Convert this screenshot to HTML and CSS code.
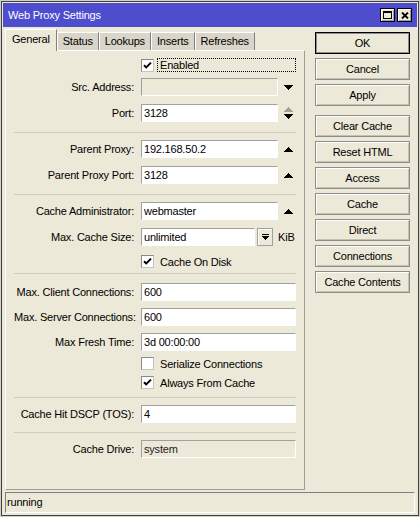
FILE: index.html
```html
<!DOCTYPE html>
<html>
<head>
    <title>Web Proxy Settings</title>
    <link rel="stylesheet" href="styles.css">
</head>
<body>
<div class="window">
    <div class="titlebar">
        <span class="title">Web Proxy Settings</span>
        <div class="title-btns">
            <span class="tbtn">
                <svg width="9" height="8"><path d="M0 0h9v2H0z M0 2h1v6H0z M8 2h1v6H8z M0 7h9v1H0z"/></svg>
            </span>
            <span class="tbtn">
                <svg width="8" height="7"><path d="M1 0.5L7 6.5 M7 0.5L1 6.5" stroke="#000" stroke-width="1.8"/></svg>
            </span>
        </div>
    </div>

    <div class="main">
        <div class="left">
            <div class="tabs">
                <span class="tab active">General</span>
                <span class="tab">Status</span>
                <span class="tab">Lookups</span>
                <span class="tab">Inserts</span>
                <span class="tab">Refreshes</span>
            </div>
            <div class="panel">
                <div class="cb-row first">
                    <span class="label"></span>
                    <span class="check">
                        <svg width="11" height="11"><path d="M2 5.2l2.2 2.2 4.8-4.8" fill="none" stroke="#000" stroke-width="2"/></svg>
                    </span>
                    <span class="cb-text focus">Enabled</span>
                </div>
                <div class="row mt6">
                    <span class="label">Src. Address:</span>
                    <span class="field off"></span>
                    <span class="arrow">
                        <svg width="9" height="5"><path d="M0 0h9v1H0z M1 1h7v1H1z M2 2h5v1H2z M3 3h3v1H3z M4 4h1v1H4z"/></svg>
                    </span>
                </div>
                <div class="row">
                    <span class="label">Port:</span>
                    <span class="field">3128</span>
                    <span class="arrow spin">
                        <svg width="9" height="5"><path fill="#a0a0a0" d="M4 0h1v1H4z M3 1h3v1H3z M2 2h5v1H2z M1 3h7v1H1z M0 4h9v1H0z"/></svg>
                        <svg width="9" height="5"><path d="M0 0h9v1H0z M1 1h7v1H1z M2 2h5v1H2z M3 3h3v1H3z M4 4h1v1H4z"/></svg>
                    </span>
                </div>

                <div class="sep"></div>

                <div class="row mt7">
                    <span class="label">Parent Proxy:</span>
                    <span class="field">192.168.50.2</span>
                    <span class="arrow">
                        <svg width="9" height="5"><path d="M4 0h1v1H4z M3 1h3v1H3z M2 2h5v1H2z M1 3h7v1H1z M0 4h9v1H0z"/></svg>
                    </span>
                </div>
                <div class="row">
                    <span class="label">Parent Proxy Port:</span>
                    <span class="field">3128</span>
                    <span class="arrow">
                        <svg width="9" height="5"><path d="M4 0h1v1H4z M3 1h3v1H3z M2 2h5v1H2z M1 3h7v1H1z M0 4h9v1H0z"/></svg>
                    </span>
                </div>

                <div class="sep"></div>

                <div class="row mt7">
                    <span class="label">Cache Administrator:</span>
                    <span class="field">webmaster</span>
                    <span class="arrow">
                        <svg width="9" height="5"><path d="M4 0h1v1H4z M3 1h3v1H3z M2 2h5v1H2z M1 3h7v1H1z M0 4h9v1H0z"/></svg>
                    </span>
                </div>
                <div class="row">
                    <span class="label">Max. Cache Size:</span>
                    <span class="field short">unlimited</span>
                    <span class="dd">
                        <svg width="7" height="6"><path d="M0 0h7v1H0z M0 2h7v1H0z M1 3h5v1H1z M2 4h3v1H2z M3 5h1v1H3z"/></svg>
                    </span>
                    <span class="unit">KiB</span>
                </div>
                <div class="cb-row mt9">
                    <span class="label"></span>
                    <span class="check">
                        <svg width="11" height="11"><path d="M2 5.2l2.2 2.2 4.8-4.8" fill="none" stroke="#000" stroke-width="2"/></svg>
                    </span>
                    <span class="cb-text">Cache On Disk</span>
                </div>

                <div class="sep sep-b"></div>

                <div class="row mt9">
                    <span class="label">Max. Client Connections:</span>
                    <span class="field wide">600</span>
                </div>
                <div class="row mt7">
                    <span class="label">Max. Server Connections:</span>
                    <span class="field wide">600</span>
                </div>
                <div class="row mt7">
                    <span class="label">Max Fresh Time:</span>
                    <span class="field wide">3d 00:00:00</span>
                </div>
                <div class="cb-row mt6">
                    <span class="label"></span>
                    <span class="check"></span>
                    <span class="cb-text">Serialize Connections</span>
                </div>
                <div class="cb-row mt6">
                    <span class="label"></span>
                    <span class="check">
                        <svg width="11" height="11"><path d="M2 5.2l2.2 2.2 4.8-4.8" fill="none" stroke="#000" stroke-width="2"/></svg>
                    </span>
                    <span class="cb-text">Always From Cache</span>
                </div>

                <div class="sep sep-c"></div>

                <div class="row mt7">
                    <span class="label">Cache Hit DSCP (TOS):</span>
                    <span class="field wide">4</span>
                </div>

                <div class="sep sep-d"></div>

                <div class="row mt7">
                    <span class="label">Cache Drive:</span>
                    <span class="field wide off">system</span>
                </div>
            </div>
        </div>

        <div class="buttons">
            <div class="btn default">OK</div>
            <div class="btn">Cancel</div>
            <div class="btn">Apply</div>
            <div class="btn group">Clear Cache</div>
            <div class="btn">Reset HTML</div>
            <div class="btn">Access</div>
            <div class="btn">Cache</div>
            <div class="btn">Direct</div>
            <div class="btn">Connections</div>
            <div class="btn">Cache Contents</div>
        </div>
    </div>

    <div class="statusbar">running</div>
</div>
</body>
</html>
```

FILE: styles.css
```css
* {
    box-sizing: border-box;
}
html, body {
    margin: 0;
}
body {
    width: 420px;
    height: 517px;
    padding: 1px;
    background: #d4d0c8;
    font-family: "Liberation Sans", Arial, sans-serif;
    font-size: 11px;
    letter-spacing: -0.2px;
    color: #000;
}
.window {
    height: 515px;
    border: 1px solid #404040;
    padding: 1px;
    background: #ece9d8;
    display: flex;
    flex-direction: column;
}

/* title bar */
.titlebar {
    height: 24px;
    flex: none;
    background: #4d4dce;
    color: #fff;
    display: flex;
    align-items: center;
    padding: 0 5px 0 5px;
}
.title { flex: 1; }
.title-btns {
    display: flex;
    gap: 2px;
}
.tbtn {
    width: 15px;
    height: 14px;
    border: 1px solid #000;
    background: #ece9d8;
    box-shadow: inset 1px 1px #fff, inset -1px -1px #9d9d9d;
    display: flex;
    align-items: center;
    justify-content: center;
}

/* main area */
.main {
    display: flex;
    margin-top: 2px;
    padding-left: 2px;
}
.left { width: 300px; }

.tabs {
    height: 21px;
    display: flex;
    align-items: flex-end;
}
.tab {
    height: 18px;
    padding: 0 5px;
    border: 1px solid;
    border-color: #fff #808080 transparent #fff;
    border-bottom: none;
    background: #d9d5c8;
    line-height: 17px;
}
.tab.active {
    height: 22px;
    margin-bottom: -1px;
    padding: 0 6px;
    background: #ece9d8;
    line-height: 19px;
    position: relative;
    z-index: 1;
}

.panel {
    height: 440px;
    border: 1px solid;
    border-color: #fff #9d9d9d #9d9d9d #fff;
    padding: 7px 8px 0 8px;
    display: flex;
    flex-direction: column;
}

.row {
    height: 18px;
    margin-top: 8px;
    display: flex;
    align-items: center;
    flex: none;
}
.cb-row {
    height: 13px;
    display: flex;
    align-items: center;
    flex: none;
}
.cb-row.first { height: 14px; }
.mt6 { margin-top: 6px; }
.mt7 { margin-top: 7px; }
.mt9 { margin-top: 9px; }

.label {
    width: 120px;
    margin-right: 7px;
    text-align: right;
    white-space: nowrap;
    flex: none;
}
.field {
    width: 137px;
    height: 18px;
    border: 1px solid;
    border-color: #a0a0a0 #fff #fff #a0a0a0;
    background: #fff;
    padding: 0 2px;
    line-height: 16px;
    flex: none;
}
.field.wide { width: 155px; }
.field.short { width: 114px; }
.field.off {
    background: #ece9d8;
    color: #222;
}
.arrow {
    margin-left: 6px;
    display: flex;
    flex-direction: column;
    gap: 2px;
}
.arrow svg { display: block; }
.dd {
    width: 16px;
    height: 18px;
    margin-left: 2px;
    border: 1px solid #a0a0a0;
    box-shadow: inset 1px 1px #fff;
    display: flex;
    align-items: center;
    justify-content: center;
}
.unit { margin-left: 5px; }

.check {
    width: 13px;
    height: 13px;
    border: 1px solid;
    border-color: #8a8a8a #c4c4c4 #c4c4c4 #8a8a8a;
    background: #fff;
    flex: none;
}
.check svg { display: block; }
.cb-text { margin-left: 6px; }
.cb-text.focus {
    width: 140px;
    height: 14px;
    margin-left: 3px;
    padding-left: 2px;
    border: 1px dotted #000;
    line-height: 12px;
}

.sep {
    height: 0;
    border-top: 1px solid #cfcbbe;
    margin-top: 10px;
    flex: none;
}
.sep-b { margin-top: 5px; }
.sep-c { margin-top: 8px; }
.sep-d { margin-top: 9px; }

/* buttons on the right */
.buttons {
    width: 95px;
    margin: 3px 0 0 10px;
    display: flex;
    flex-direction: column;
    gap: 4px;
}
.btn {
    height: 22px;
    border: 1px solid #8d8d8d;
    box-shadow: inset 1px 1px #fff, inset -1px -1px #c4c0b2;
    text-align: center;
    line-height: 20px;
}
.btn.default {
    border-color: #000;
    box-shadow: inset 0 0 0 1px #8d8d8d;
}
.btn.group { margin-top: 5px; }

.statusbar {
    height: 21px;
    margin: 2px 2px 0 2px;
    border: 1px solid;
    border-color: #808080 #fff #fff #808080;
    padding-left: 1px;
    line-height: 19px;
}
```
